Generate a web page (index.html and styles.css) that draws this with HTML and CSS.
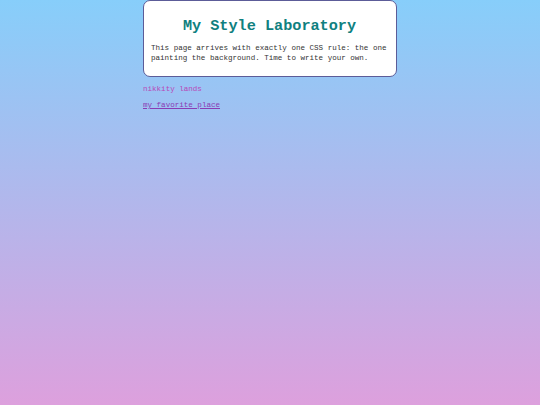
FILE: index.html
```html
<!DOCTYPE html>
<html>
<head>
<meta charset="utf-8">
<title>My Style Laboratory</title>
<link rel="stylesheet" href="styles.css">
</head>
<body>
<div class="wrap">
  <div class="card">
    <h1 class="title">My Style Laboratory</h1>
    <p class="intro">This page arrives with exactly one CSS rule: the one painting the background. Time to write your own.</p>
  </div>
  <p class="tag">nikkity lands</p>
  <p class="fav"><a href="#" class="fav-link">my favorite place</a></p>
</div>
</body>
</html>
```
FILE: styles.css
```css
html {
  min-height: 100%;
  background: linear-gradient(to bottom, #87cefa, #dda0dd);
}
body {
  margin: 0;
  min-height: 405px;
  font-family: "Liberation Mono", "Courier New", monospace;
}
.wrap {
  width: 254px;
  margin: 0 auto;
}
.card {
  box-sizing: border-box;
  background: #fff;
  border: 1.5px solid #5c5c98;
  border-radius: 7px;
  padding: 14px 8px 13px 7px;
}
.title {
  margin: 0 0 7px;
  text-align: center;
  font-size: 15.2px;
  line-height: 22px;
  font-weight: bold;
  color: #0f8080;
}
.intro {
  margin: 0;
  font-size: 7.55px;
  line-height: 9.5px;
  color: #333;
}
.tag {
  margin: 8px 0 0;
  font-size: 7.55px;
  line-height: 9px;
  color: #b848b8;
}
.fav {
  margin: 7px 0 0;
  font-size: 7.55px;
  line-height: 9px;
}
.fav-link {
  color: #8a3cb4;
}
```
